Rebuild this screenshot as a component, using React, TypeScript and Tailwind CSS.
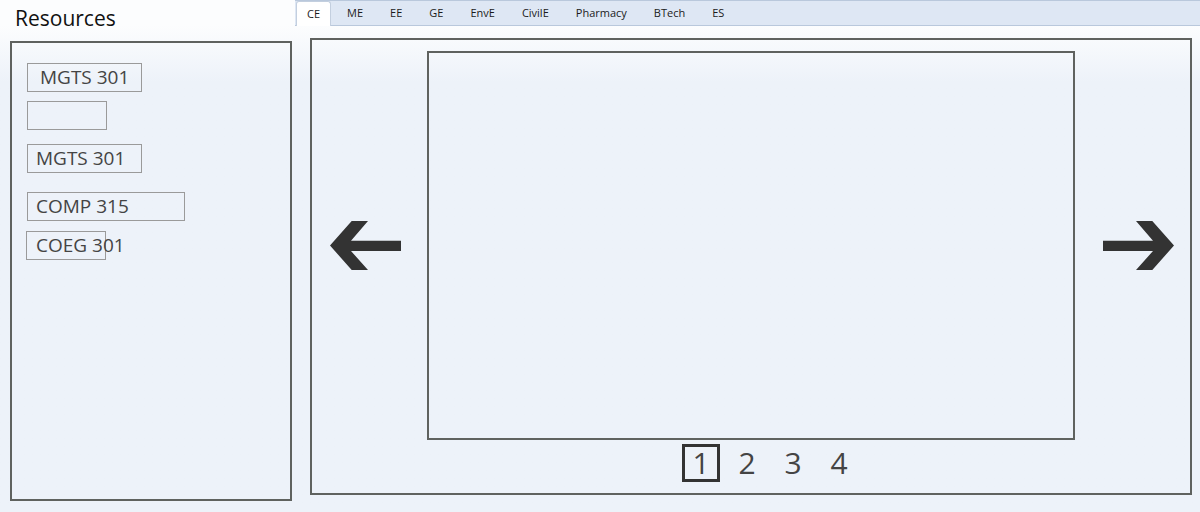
import { useState } from "react";

// --- DATA ---
const tabs = ["CE", "ME", "EE", "GE", "EnvE", "CivilE", "Pharmacy", "BTech", "ES"];

const ui = { fontFamily: '"Open Sans", "Noto Sans", sans-serif' };

function Arrow({ dir }: { dir: "left" | "right" }) {
  return (
    <svg
      width="72"
      height="50"
      viewBox="0 0 72 50"
      className={dir === "right" ? "-scale-x-100" : ""}
    >
      <path
        d="M0 24.5 L21.7 0 L38 0 L21 19.8 L71 19.8 L71 30 L21 30 L38 49 L21.7 49 Z"
        fill="#333333"
      />
    </svg>
  );
}

function Resource({ label, w, pl }: { label: string; w: number; pl: number }) {
  return (
    <div
      className="h-[29px] border border-[#9a9a9a] text-[19px] leading-[27px] text-[#444] whitespace-nowrap overflow-visible"
      style={{ width: w, paddingLeft: pl }}
    >
      {label}
    </div>
  );
}

export default function App() {
  const [active, setActive] = useState(0);
  const [page, setPage] = useState(1);

  return (
    <div
      className="w-[1200px] h-[512px] flex overflow-hidden bg-gradient-to-b from-[#fcfdfe] from-[5%] to-[#edf2f9] to-[16%]"
      style={ui}
    >
      {/* ── LEFT: RESOURCES ── */}
      <div className="w-[295px] shrink-0 flex flex-col">
        <h1 className="pl-[15px] pt-[4px] h-[41px] text-[21px] leading-[28px] text-[#111]">Resources</h1>
        <div className="ml-[10px] w-[282px] h-[460px] border-2 border-[#5f625f] pl-[15px] pt-[20px] flex flex-col items-start">
          <Resource label="MGTS 301" w={115} pl={12} />
          <div className="mt-[9px]">
            <Resource label="" w={80} pl={0} />
          </div>
          <div className="mt-[14px]">
            <Resource label="MGTS 301" w={115} pl={8} />
          </div>
          <div className="mt-[19px]">
            <Resource label="COMP 315" w={158} pl={8} />
          </div>
          <div className="mt-[10px] -ml-px">
            <Resource label="COEG 301" w={80} pl={9} />
          </div>
        </div>
      </div>

      {/* ── RIGHT: TABS + VIEWER ── */}
      <div className="flex-1 flex flex-col">
        <div className="h-[26px] bg-[#dee7f4] border-t border-b border-[#b9c8dc] flex items-end gap-[5px] pl-px">
          {tabs.map((t, i) => (
            <button
              key={t}
              onClick={() => setActive(i)}
              className={
                "h-[24px] px-[10px] text-[11px] leading-[22px] text-[#1b1b1b] rounded-t-[3px] " +
                (i === active ? "bg-white border border-b-0 border-[#c3cfdf] -mb-px h-[25px]" : "border border-transparent")
              }
            >
              {t}
            </button>
          ))}
        </div>

        <div className="ml-[15px] mt-[12px] w-[882px] h-[457px] border-2 border-[#5f625f] flex flex-col">
          <div className="flex items-center mt-[11px]">
            <div className="w-[115px] pl-[18px] flex">
              <Arrow dir="left" />
            </div>
            <div className="w-[648px] h-[389px] border-2 border-[#5f625f]" />
            <div className="w-[114px] pl-[27px] flex">
              <Arrow dir="right" />
            </div>
          </div>
          <div className="flex mt-[4px] pl-[370px] text-[#444]">
            <div className="flex items-center gap-[8px]">
              {[1, 2, 3, 4].map((n) => (
                <button
                  key={n}
                  onClick={() => setPage(n)}
                  className={
                    "w-[38px] h-[38px] flex items-center justify-center text-[30px] leading-none " +
                    (page === n ? "border-[3px] border-[#333]" : "border-[3px] border-transparent")
                  }
                >
                  {n}
                </button>
              ))}
            </div>
          </div>
        </div>
      </div>
    </div>
  );
}
